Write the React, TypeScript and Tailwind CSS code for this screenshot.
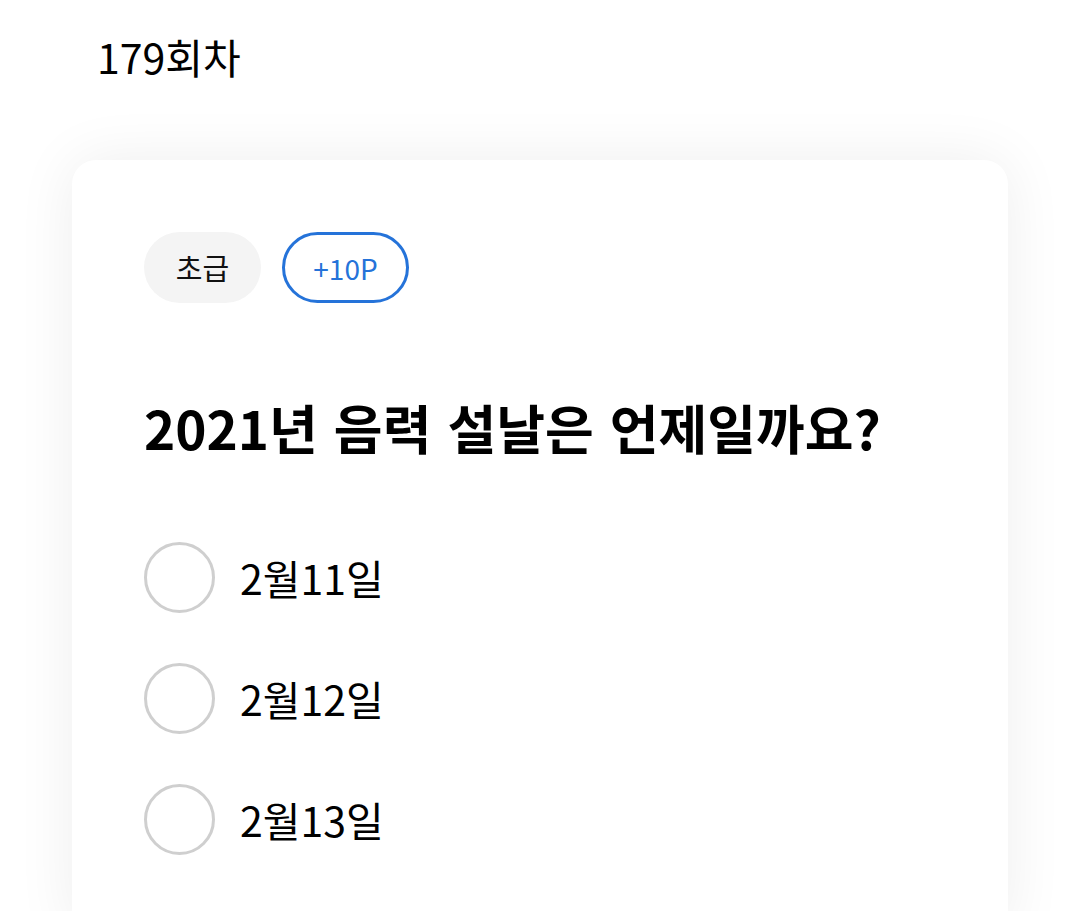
const options = ['2월11일', '2월12일', '2월13일']

export default function App() {
  return (
    <div
      className="min-h-[911px] bg-white overflow-hidden"
      style={{ fontFamily: '"Noto Sans CJK KR", "Noto Sans", sans-serif' }}
    >
      <div className="pl-[97px] pt-[28px] text-[41px] leading-[56px] text-black">179회차</div>

      <div className="mx-[72px] mt-[76px] rounded-[24px] bg-white px-[72px] pt-[72px] pb-[80px] shadow-[0_0_60px_rgba(0,0,0,0.07)]">
        <div className="flex gap-[21px]">
          <span className="flex h-[71px] w-[117px] items-center justify-center rounded-full bg-[#f4f4f4] text-[29px] text-[#111]">
            초급
          </span>
          <span className="flex h-[71px] w-[127px] items-center justify-center rounded-full border-[3px] border-[#2573d9] text-[28px] text-[#2573d9]">
            +10P
          </span>
        </div>

        <h1 className="mt-[92px] text-[53px] leading-[64px] font-bold text-black [word-spacing:4px]">
          2021년 음력 설날은 언제일까요?
        </h1>

        <div className="mt-[83px] flex flex-col gap-[50px]">
          {options.map((o) => (
            <label key={o} className="flex items-center gap-[25px]">
              <span className="h-[71px] w-[71px] shrink-0 rounded-full border-[3px] border-[#cfcfcf]" />
              <span className="text-[41px] text-black">{o}</span>
            </label>
          ))}
        </div>
      </div>
    </div>
  )
}
